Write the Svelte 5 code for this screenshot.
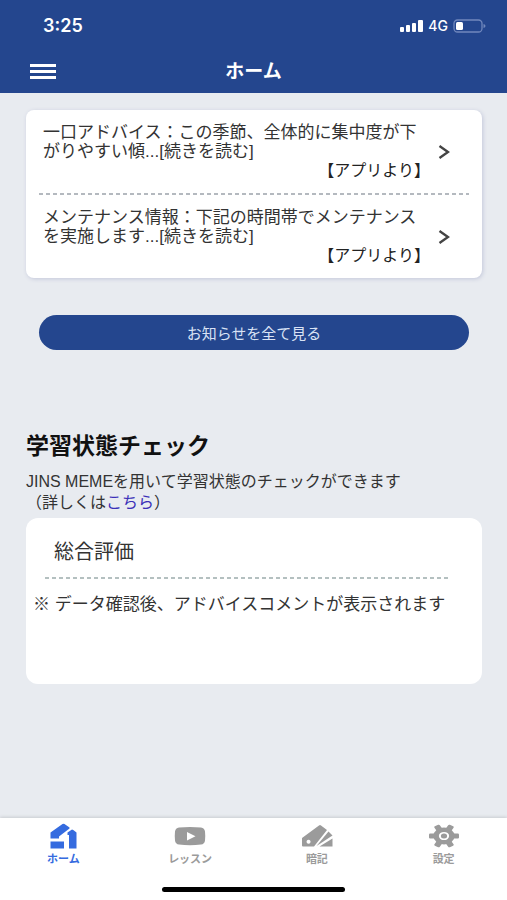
<script lang="ts">
	type Notice = { id: number; lines: string[]; from: string };

	const notices: Notice[] = [
		{
			id: 1,
			lines: ['一口アドバイス：この季節、全体的に集中度が下', 'がりやすい傾...[続きを読む]'],
			from: '【アプリより】'
		},
		{
			id: 2,
			lines: ['メンテナンス情報：下記の時間帯でメンテナンス', 'を実施します...[続きを読む]'],
			from: '【アプリより】'
		}
	];

	const tabs = [
		{ id: 'home', label: 'ホーム' },
		{ id: 'lesson', label: 'レッスン' },
		{ id: 'cards', label: '暗記' },
		{ id: 'settings', label: '設定' }
	];

	let active = $state('home');
</script>

<div class="app">
	<header>
		<div class="status">
			<span class="time">3:25</span>
			<div class="status-right">
				<svg width="23" height="12" viewBox="0 0 23 12" fill="#fff" aria-hidden="true">
					<rect x="0" y="7" width="4" height="5" rx="1" />
					<rect x="6" y="5" width="4" height="7" rx="1" />
					<rect x="12" y="3" width="4" height="9" rx="1" />
					<rect x="18" y="0" width="5" height="12" rx="1" />
				</svg>
				<span class="network">4G</span>
				<svg width="33" height="14" viewBox="0 0 33 14" aria-hidden="true">
					<rect x="1" y="1" width="28" height="12" rx="3.5" fill="none" stroke="#7188bd" stroke-width="1.3" />
					<path d="M30.5 5v4q2-.5 2-2t-2-2z" fill="#7188bd" />
					<rect x="3" y="3" width="7" height="8" rx="1.5" fill="#fff" />
				</svg>
			</div>
		</div>
		<div class="bar">
			<button type="button" class="menu" aria-label="メニュー">
				<svg width="26" height="16" viewBox="0 0 26 16" fill="#fff" aria-hidden="true">
					<rect y="0" width="26" height="3" />
					<rect y="6" width="26" height="3" />
					<rect y="12" width="26" height="3" />
				</svg>
			</button>
			<h1>ホーム</h1>
		</div>
	</header>

	<main>
		<ul class="card notices">
			{#each notices as notice (notice.id)}
				<li>
					<a href="#notice-{notice.id}">
						<span class="notice-text">
							{#each notice.lines as line}
								<span>{line}</span>
							{/each}
							<span class="from">{notice.from}</span>
						</span>
						<svg width="12" height="16" viewBox="0 0 12 16" aria-hidden="true">
							<path d="M1.5 2L10 8l-8.5 6" fill="none" stroke="#444" stroke-width="2.4" />
						</svg>
					</a>
				</li>
			{/each}
		</ul>

		<button type="button" class="all">お知らせを全て見る</button>

		<section>
			<h2>学習状態チェック</h2>
			<p class="lead">
				JINS MEMEを用いて学習状態のチェックができます<br />（詳しくは<a href="#detail">こちら</a>）
			</p>
			<div class="card result">
				<h3>総合評価</h3>
				<p>※ データ確認後、アドバイスコメントが表示されます</p>
			</div>
		</section>
	</main>

	<footer>
		<nav>
			{#each tabs as tab (tab.id)}
				<button type="button" class:active={active === tab.id} onclick={() => (active = tab.id)}>
					<svg width="32" height="26" viewBox="0 0 32 26" fill="currentColor" aria-hidden="true">
						{#if tab.id === 'home'}
							<path d="M3.5 9.5L15.5 1q1-.7 2 0L22.5 4.5v1L12 13.500V15.500H3.500z" />
							<path d="M20.500 9.500L25 6.500q1 0 4.500 3V25.500h-7.500V12h-1.500z" />
							<path d="M3.500 18.500h13.500v7H3.500z" />
						{:else if tab.id === 'lesson'}
							<path
								fill-rule="evenodd"
								d="M5 4.5Q16 3.3 27 4.5Q30.5 5 31 8.5Q31.5 13 31 17.5Q30.5 21.2 27 21.6Q16 22.7 5 21.6Q1.5 21.2 1 17.5Q.5 13 1 8.5Q1.5 5 5 4.5zM13 9v8.5l8.500-4.250z"
							/>
						{:else if tab.id === 'cards'}
							<path
								fill-rule="evenodd"
								d="M1 15L18 2.5q1-.8 2 0L26 7 13 23.500H2q-1 0-1-1zM7.5 16.800a2 2 0 1 0 .1 0z"
							/>
							<path d="M27.500 8.500l4 4L15.500 23z" />
							<path d="M31.5 15.500V23.500H18.500z" />
						{:else}
							<g transform="translate(16 13) scale(1.25 1)">
								<circle r="8.5" />
								<rect x="-12" y="-2.5" width="24" height="5" rx="1" />
								<rect x="-12" y="-2.5" width="24" height="5" rx="1" transform="rotate(60)" />
								<rect x="-12" y="-2.5" width="24" height="5" rx="1" transform="rotate(120)" />
								<circle r="3.3" fill="none" stroke="#fff" stroke-width="1.6" />
							</g>
						{/if}
					</svg>
					<span>{tab.label}</span>
				</button>
			{/each}
		</nav>
		<div class="indicator"></div>
	</footer>
</div>

<style>
	:global(body) {
		margin: 0;
		background: #e8ebf0;
	}

	.app {
		display: flex;
		flex-direction: column;
		min-height: 100vh;
		font-family: 'Liberation Sans', 'Noto Sans CJK JP', sans-serif;
		color: #333;
		background: #e8ebf0;
	}

	button {
		padding: 0;
		border: 0;
		background: none;
		font-family: inherit;
		cursor: pointer;
	}

	svg {
		display: block;
	}

	h1,
	h2,
	h3,
	p,
	ul {
		margin: 0;
		padding: 0;
	}

	header {
		color: #fff;
		background: #24468e;
	}

	.status {
		display: flex;
		justify-content: space-between;
		align-items: center;
		height: 51px;
		padding: 0 21px 0 43px;
	}

	.time {
		font-family: Inter, sans-serif;
		font-size: 18px;
		font-weight: 600;
	}

	.status-right {
		display: flex;
		align-items: center;
		gap: 5px;
	}

	.network {
		font-family: Inter, sans-serif;
		font-size: 14px;
		font-weight: 500;
	}

	.bar {
		display: grid;
		grid-template-columns: 1fr auto 1fr;
		align-items: center;
		height: 42px;
		padding: 0 30px;
	}

	.menu {
		justify-self: start;
	}

	h1 {
		font-size: 19px;
		line-height: 28px;
	}

	main {
		flex: 1;
		padding: 17px 25px 24px 26px;
	}

	.card {
		background: #fff;
		border-radius: 8px;
	}

	.notices {
		padding: 0 13px;
		list-style: none;
		box-shadow: 1px 1px 4px #c3c7da;
	}

	.notices li + li::before {
		content: '';
		display: block;
		height: 2px;
		background: repeating-linear-gradient(90deg, #b4b9bf 0 4px, transparent 4px 7px);
	}

	.notices a {
		display: flex;
		align-items: center;
		gap: 8px;
		padding: 13px 19px 13px 4px;
		color: inherit;
		text-decoration: none;
	}

	.notice-text {
		display: flex;
		flex: 1;
		flex-direction: column;
		font-size: 17px;
		line-height: 19px;
	}

	.from {
		align-self: flex-end;
		color: #222;
		font-size: 16px;
	}

	.all {
		display: block;
		width: calc(100% - 26px);
		height: 35px;
		margin: 37px auto 0 13px;
		border-radius: 18px;
		color: #d9e2f5;
		background: #24468e;
		font-size: 15px;
	}

	section {
		margin-top: 80px;
	}

	h2 {
		font-size: 23px;
		line-height: 32px;
		color: #111;
	}

	.lead {
		margin-top: 9px;
		font-size: 16px;
		line-height: 21px;
	}

	.lead a {
		color: #3a2fb8;
		text-decoration: none;
	}

	.result {
		min-height: 166px;
		margin-top: 5px;
		border-radius: 12px;
	}

	h3 {
		margin: 0 31px 0 19px;
		padding: 20px 9px 11px;
		font-size: 20px;
		font-weight: 400;
		line-height: 28px;
	}

	h3 + p::before {
		content: '';
		display: block;
		height: 2px;
		margin: 0 24px 14px 12px;
		background: repeating-linear-gradient(90deg, #b4c0c0 0 4px, transparent 4px 7px);
	}

	.result p {
		padding: 0 7px 13px;
		font-size: 17px;
		line-height: 24px;
	}

	footer {
		position: sticky;
		bottom: 0;
		background: #fff;
		box-shadow: 0 -1px 3px #c9ccd0;
	}

	nav {
		display: grid;
		grid-template-columns: repeat(4, 1fr);
		padding-top: 5px;
	}

	nav button {
		display: flex;
		flex-direction: column;
		align-items: center;
		gap: 2px;
		color: #9b9b9b;
		font-size: 11px;
		font-weight: 700;
		line-height: 16px;
	}

	nav .active {
		color: #356bdf;
	}

	.indicator {
		width: 36%;
		height: 5px;
		margin: 20px auto 8px;
		border-radius: 3px;
		background: #000;
	}
</style>
